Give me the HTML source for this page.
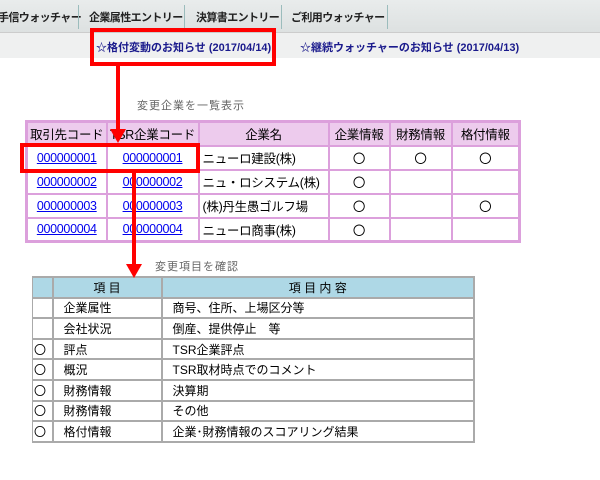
<!DOCTYPE html>
<html><head><meta charset="utf-8"><style>
*{margin:0;padding:0;box-sizing:border-box}
body{width:600px;height:480px;background:#fff;position:relative;overflow:hidden;font-family:"Liberation Sans","Noto Sans CJK JP",sans-serif;}
.nav{position:absolute;left:0;top:0;width:600px;height:33px;background:linear-gradient(#e9ecec,#dde1e1);border-bottom:1px solid #ccc}
.nav span{position:absolute;top:9px;font-size:11px;letter-spacing:-0.6px;font-weight:bold;color:#222;white-space:nowrap}
.sep{position:absolute;top:5px;width:1px;height:24px;background:#9bbcbc}
.sub{position:absolute;left:0;top:33px;width:600px;height:25px;background:#eff0f0}
.sub span{position:absolute;top:6px;font-size:11px;letter-spacing:0;font-weight:bold;color:#1a1a8c;white-space:nowrap}
.cap{position:absolute;font-size:11px;color:#666;letter-spacing:1px}
table{position:absolute;border-collapse:collapse;font-size:12px;table-layout:fixed}
td{white-space:nowrap;overflow:hidden}
.t1{left:25px;top:120px;width:496px;border:3px solid #dca0dc}
.t1 td{border:2px solid #dca0dc;height:24px;text-align:center;padding:0;font-size:12.5px;letter-spacing:-0.3px}
.t1 tr:first-child td{background:#edcbed}
.t1 a{color:#0000ee;text-decoration:underline}
.t1 td.l{text-align:left;padding-left:3px}
.t2{left:32px;top:276px;width:443px;border:1px solid #aaa}
.t2 td{border:2px solid #aaa;border-left-width:1px;height:20.6px;padding:0 0 0 10px;font-size:12px}
.t2 tr:first-child td{background:#aed8e6;text-align:center;padding:0}
.t2 td.c{padding:0 0 0 1px;font-size:12px}
.red{position:absolute;border:4px solid #f00}
</style></head><body>
<div class="nav">
<span style="left:-2px">手信ウォッチャー</span><div class="sep" style="left:78px"></div>
<span style="left:89px">企業属性エントリー</span><div class="sep" style="left:184px"></div>
<span style="left:196px">決算書エントリー</span><div class="sep" style="left:281px"></div>
<span style="left:291px">ご利用ウォッチャー</span><div class="sep" style="left:387px"></div>
</div>
<div class="sub">
<span style="left:96px">☆格付変動のお知らせ (2017/04/14)</span>
<span style="left:300px">☆継続ウォッチャーのお知らせ (2017/04/13)</span>
</div>
<div class="cap" style="left:137px;top:97px">変更企業を一覧表示</div>
<table class="t1">
<colgroup><col style="width:80px"><col style="width:92px"><col style="width:130px"><col style="width:61px"><col style="width:62px"><col></colgroup>
<tr><td>取引先コード</td><td>TSR企業コード</td><td>企業名</td><td>企業情報</td><td>財務情報</td><td>格付情報</td></tr>
<tr><td><a>000000001</a></td><td><a>000000001</a></td><td class="l">ニューロ建設(株)</td><td>〇</td><td>〇</td><td>〇</td></tr>
<tr><td><a>000000002</a></td><td><a>000000002</a></td><td class="l">ニュ・ロシステム(株)</td><td>〇</td><td></td><td></td></tr>
<tr><td><a>000000003</a></td><td><a>000000003</a></td><td class="l">(株)丹生愚ゴルフ場</td><td>〇</td><td></td><td>〇</td></tr>
<tr><td><a>000000004</a></td><td><a>000000004</a></td><td class="l">ニューロ商事(株)</td><td>〇</td><td></td><td></td></tr>
</table>
<div class="cap" style="left:155px;top:258px">変更項目を確認</div>
<table class="t2">
<colgroup><col style="width:20px"><col style="width:109px"><col></colgroup>
<tr><td></td><td>項 目</td><td>項 目 内 容</td></tr>
<tr><td class="c"></td><td>企業属性</td><td>商号、住所、上場区分等</td></tr>
<tr><td class="c"></td><td>会社状況</td><td>倒産、提供停止　等</td></tr>
<tr><td class="c">〇</td><td>評点</td><td>TSR企業評点</td></tr>
<tr><td class="c">〇</td><td>概況</td><td>TSR取材時点でのコメント</td></tr>
<tr><td class="c">〇</td><td>財務情報</td><td>決算期</td></tr>
<tr><td class="c">〇</td><td>財務情報</td><td>その他</td></tr>
<tr><td class="c">〇</td><td>格付情報</td><td>企業･財務情報のスコアリング結果</td></tr>
</table>
<div class="red" style="left:90px;top:28px;width:186px;height:38px"></div>
<div class="red" style="left:20px;top:143px;width:180px;height:30px"></div>
<div style="position:absolute;left:116px;top:66px;width:4px;height:64px;background:#f00"></div>
<div style="position:absolute;left:110px;top:129px;width:0;height:0;border-left:8px solid transparent;border-right:8px solid transparent;border-top:14px solid #f00"></div>
<div style="position:absolute;left:132px;top:173px;width:4px;height:92px;background:#f00"></div>
<div style="position:absolute;left:126px;top:264px;width:0;height:0;border-left:8px solid transparent;border-right:8px solid transparent;border-top:14px solid #f00"></div>
</body></html>
